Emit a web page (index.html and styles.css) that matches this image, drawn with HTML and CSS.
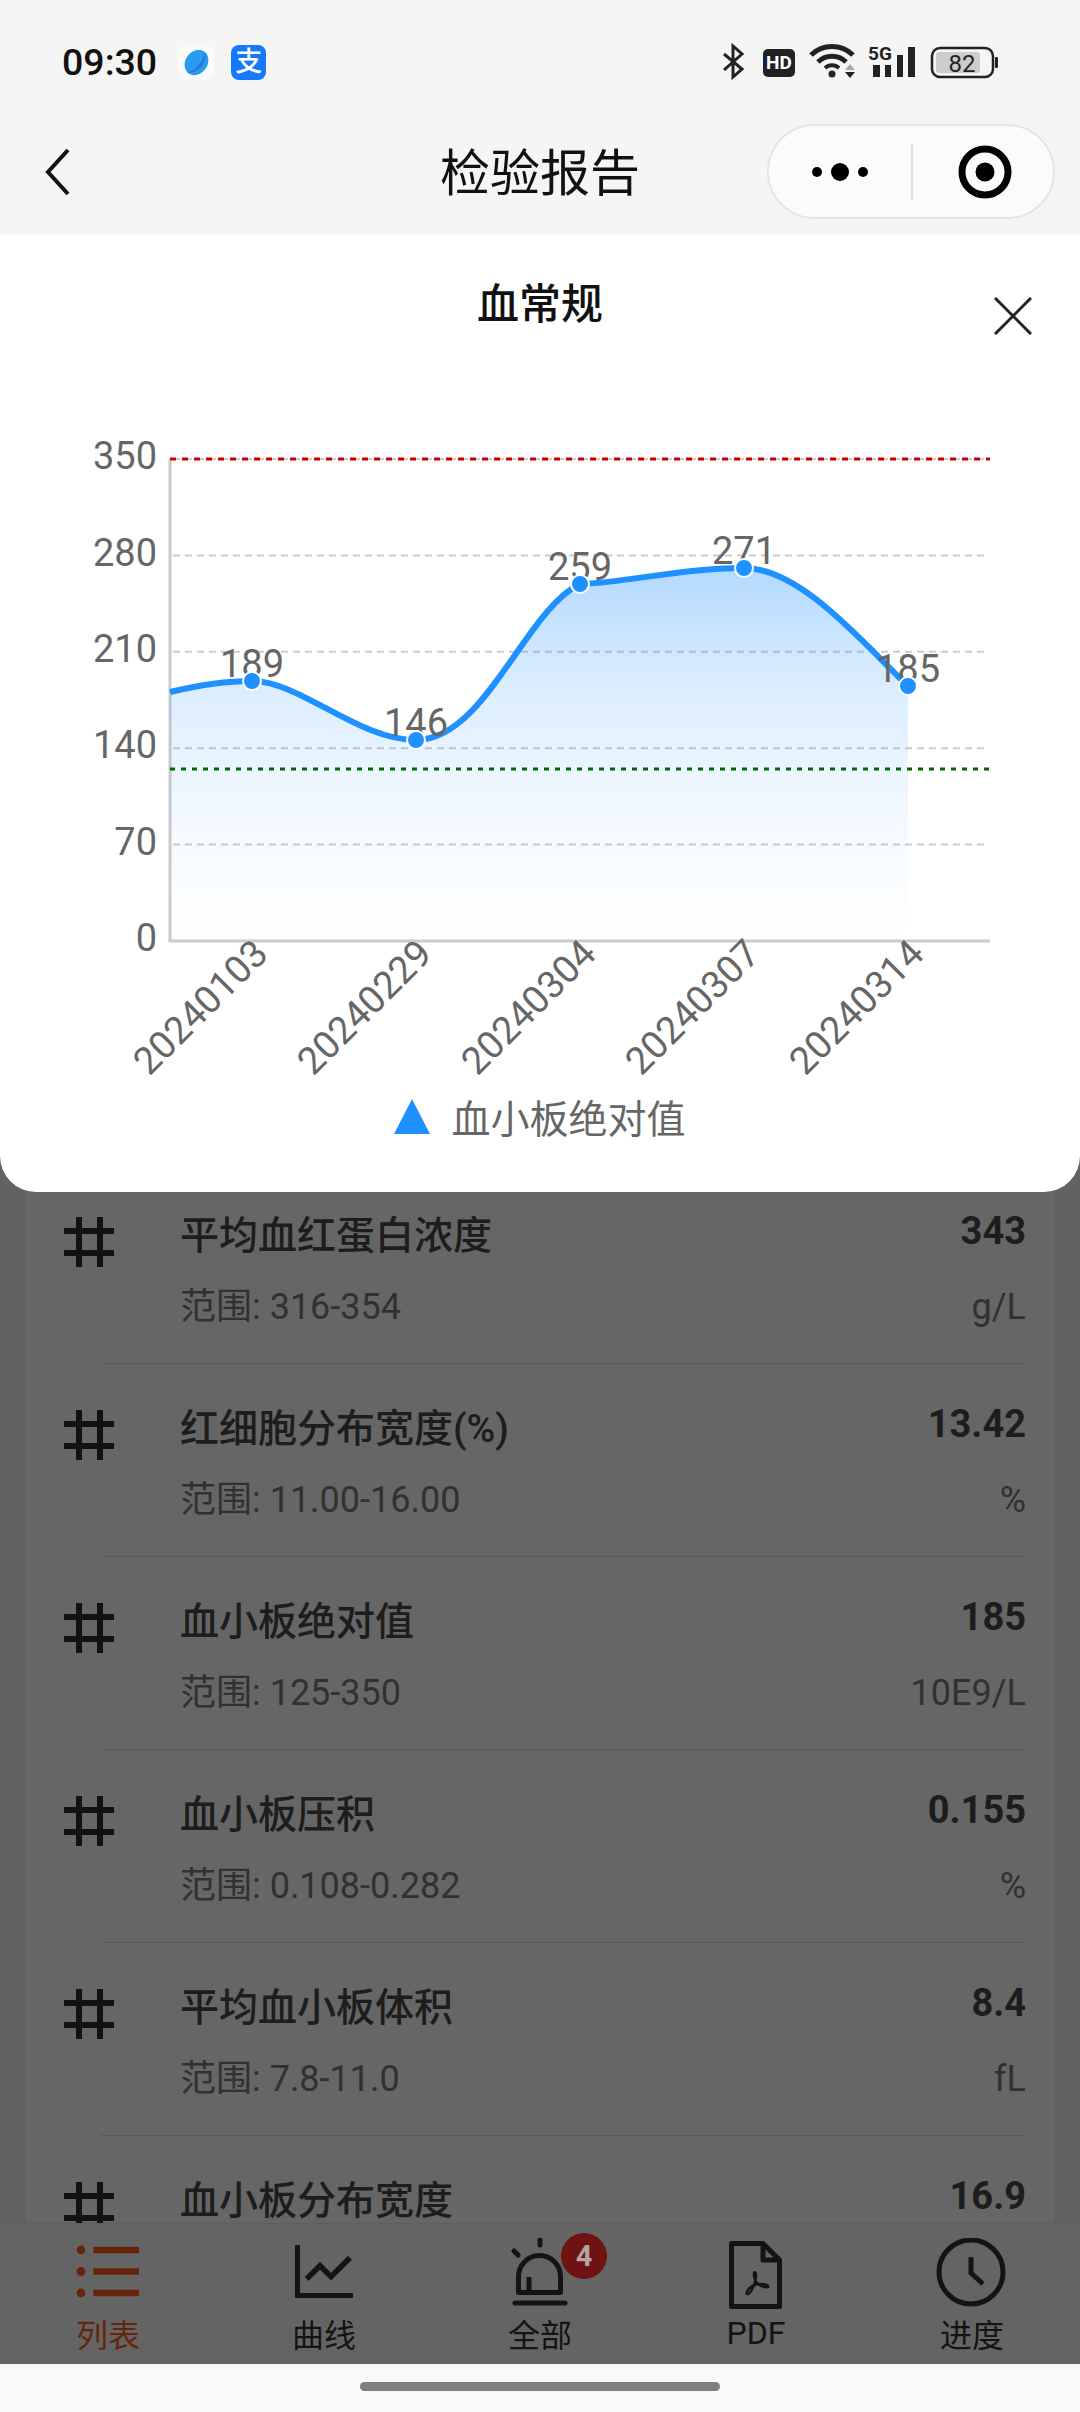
FILE: index.html
```html
<!DOCTYPE html>
<html lang="zh">
<head>
    <meta charset="UTF-8">
    <title>检验报告</title>
    <link rel="stylesheet" href="styles.css">
</head>
<body>
<div class="page">
    <div class="status">
        <div class="status-left">
            <span class="time">09:30</span>
            <svg class="app-icon" viewBox="0 0 35 35">
                <rect width="35" height="35" rx="8" fill="#fafafa"/>
                <ellipse cx="17.5" cy="17.5" rx="11" ry="13.500" transform="rotate(35 17.5 17.5)" fill="#2a9cf0"/>
                <path d="M26 7 C29 16 21 28 8 28 C17 25 24 17 26 7Z" fill="#2f6fe0"/>
            </svg>
            <span class="alipay">支</span>
        </div>
        <svg class="status-right" viewBox="720 42 282 40">
            <path d="M724 54 L742 69 L733 77 V46 L742 54 L724 70" fill="none" stroke="#222" stroke-width="3"/>
            <rect x="763" y="49" width="32" height="28" rx="5" fill="#222"/>
            <text x="779" y="69" class="st-hd">HD</text>
            <path d="M811 55 A30 30 0 0 1 853 55" fill="none" stroke="#222" stroke-width="5"/>
            <path d="M818 62 A20 20 0 0 1 846 62" fill="none" stroke="#222" stroke-width="5"/>
            <path d="M825 68 A10 10 0 0 1 839 68" fill="none" stroke="#222" stroke-width="4"/>
            <circle cx="832" cy="74" r="3.5" fill="#222"/>
            <path d="M845 70 L850 64 L855 70Z" fill="#aaa"/>
            <path d="M845 72 L855 72 L850 78Z" fill="#222"/>
            <text x="880" y="60" class="st-5g">5G</text>
            <rect x="873" y="65" width="7" height="12" fill="#222"/>
            <rect x="885" y="65" width="6" height="12" fill="#222"/>
            <rect x="897" y="55" width="6" height="22" fill="#222"/>
            <rect x="908" y="47" width="7" height="30" fill="#222"/>
            <rect x="932" y="48" width="61" height="29" rx="8" fill="none" stroke="#222" stroke-width="2.5"/>
            <rect x="936" y="52" width="44" height="21" rx="3" fill="#ccc"/>
            <rect x="995" y="57" width="3" height="11" rx="1" fill="#222"/>
            <text x="962" y="72" class="st-batt">82</text>
        </svg>
    </div>

    <div class="nav">
        <svg class="back" viewBox="0 0 30 50"><path d="M26 3 L6 25 L26 47" fill="none" stroke="#111" stroke-width="4"/></svg>
        <div class="nav-title">检验报告</div>
        <div class="capsule">
            <div class="dots"><i></i><b></b><i></i></div>
            <div class="capsule-line"></div>
            <svg class="target" viewBox="0 0 60 60">
                <circle cx="30" cy="30" r="23" fill="none" stroke="#000" stroke-width="7"/>
                <circle cx="30" cy="30" r="9.500"/>
            </svg>
        </div>
    </div>

    <div class="main">
        <div class="list">
            <div class="row">
                <svg class="hash" viewBox="0 0 50 50"><path d="M15 0 V50 M36 0 V50 M0 14 H50 M0 36 H50"/></svg>
                <div class="row-body">
                    <div class="row-top"><span class="row-name">平均血红蛋白浓度</span><span class="row-value">343</span></div>
                    <div class="row-sub"><span>范围: 316-354</span><span>g/L</span></div>
                </div>
            </div>
            <div class="sep"></div>
            <div class="row">
                <svg class="hash" viewBox="0 0 50 50"><path d="M15 0 V50 M36 0 V50 M0 14 H50 M0 36 H50"/></svg>
                <div class="row-body">
                    <div class="row-top"><span class="row-name">红细胞分布宽度(%)</span><span class="row-value">13.42</span></div>
                    <div class="row-sub"><span>范围: 11.00-16.00</span><span>%</span></div>
                </div>
            </div>
            <div class="sep"></div>
            <div class="row">
                <svg class="hash" viewBox="0 0 50 50"><path d="M15 0 V50 M36 0 V50 M0 14 H50 M0 36 H50"/></svg>
                <div class="row-body">
                    <div class="row-top"><span class="row-name">血小板绝对值</span><span class="row-value">185</span></div>
                    <div class="row-sub"><span>范围: 125-350</span><span>10E9/L</span></div>
                </div>
            </div>
            <div class="sep"></div>
            <div class="row">
                <svg class="hash" viewBox="0 0 50 50"><path d="M15 0 V50 M36 0 V50 M0 14 H50 M0 36 H50"/></svg>
                <div class="row-body">
                    <div class="row-top"><span class="row-name">血小板压积</span><span class="row-value">0.155</span></div>
                    <div class="row-sub"><span>范围: 0.108-0.282</span><span>%</span></div>
                </div>
            </div>
            <div class="sep"></div>
            <div class="row">
                <svg class="hash" viewBox="0 0 50 50"><path d="M15 0 V50 M36 0 V50 M0 14 H50 M0 36 H50"/></svg>
                <div class="row-body">
                    <div class="row-top"><span class="row-name">平均血小板体积</span><span class="row-value">8.4</span></div>
                    <div class="row-sub"><span>范围: 7.8-11.0</span><span>fL</span></div>
                </div>
            </div>
            <div class="sep"></div>
            <div class="row">
                <svg class="hash" viewBox="0 0 50 50"><path d="M15 0 V50 M36 0 V50 M0 14 H50 M0 36 H50"/></svg>
                <div class="row-body">
                    <div class="row-top"><span class="row-name">血小板分布宽度</span><span class="row-value">16.9</span></div>
                </div>
            </div>
        </div>

        <div class="tabbar">
            <div class="tab active">
                <svg class="tab-icon" viewBox="0 0 72 72"><circle cx="9" cy="12" r="4.400" class="fill"/><circle cx="9" cy="33.500" r="4.400" class="fill"/><circle cx="9" cy="55" r="4.400" class="fill"/><path d="M21.300 12 H67 M21.300 33.500 H67 M21.300 55 H67" stroke-width="6.500"/></svg>
                <span>列表</span>
            </div>
            <div class="tab">
                <svg class="tab-icon" viewBox="0 0 72 72"><path d="M9.500 7 V57.500 H65" stroke-width="5"/><path d="M18.700 41 L32 27.700 L43 38.700 L62 19.700" stroke-width="5.500"/></svg>
                <span>曲线</span>
            </div>
            <div class="tab">
                <div class="alarm">
                    <svg class="tab-icon" viewBox="0 0 72 72"><path d="M11 65 H61 M36 2 V7 M10 13 L14 17" stroke-width="5" stroke-linecap="round"/><path d="M14.500 54.500 V38.500 A21 21 0 0 1 56.500 38.500 V54.500 Z M25 54.500 V39" stroke-width="5" stroke-linejoin="round"/></svg>
                    <span class="badge">4</span>
                </div>
                <span>全部</span>
            </div>
            <div class="tab pdf">
                <svg class="tab-icon" viewBox="0 0 72 72"><path d="M11.500 5.500 H43 L59.500 22 V68.500 H11.500 Z M43 5.500 V22 H59.500" stroke-width="5" stroke-linejoin="round"/><path d="M35 34 C33 34 34 40 36 44 C38 47 45 50 48 49 C49 46 40 45 34 47 C30 49 26 53 27 56 C30 57 33 50 35 44 C36 40 37 35 35 34Z" stroke-width="2.500"/></svg>
                <span>PDF</span>
            </div>
            <div class="tab">
                <svg class="tab-icon" viewBox="0 0 72 72"><circle cx="35" cy="34" r="32" stroke-width="5"/><path d="M35 19 V35 L47 46" stroke-width="5"/></svg>
                <span>进度</span>
            </div>
        </div>

        <div class="mask"></div>

        <div class="modal">
            <div class="modal-head">
                <div class="modal-title">血常规</div>
                <svg class="close" viewBox="0 0 38 38"><path d="M1 1 L37 37 M37 1 L1 37" stroke="#222" stroke-width="3" fill="none"/></svg>
            </div>
            <!-- viewBox keeps the numbers in screen coordinates -->
            <svg class="chart" viewBox="0 375 1080 710">
                <defs>
                    <linearGradient id="area" x1="0" y1="0" x2="0" y2="1">
                        <stop offset="0" stop-color="#1e90ff" stop-opacity="0.34"/>
                        <stop offset="0.22" stop-color="#1e90ff" stop-opacity="0.21"/>
                        <stop offset="0.35" stop-color="#1e90ff" stop-opacity="0.15"/>
                        <stop offset="0.54" stop-color="#1e90ff" stop-opacity="0.09"/>
                        <stop offset="0.74" stop-color="#1e90ff" stop-opacity="0.04"/>
                        <stop offset="1" stop-color="#1e90ff" stop-opacity="0"/>
                    </linearGradient>
                </defs>
                <path class="grid" d="M173 459 H990 M173 555.400 H985 M173 651.800 H985 M173 748.200 H985 M173 844.600 H985"/>
                <path class="axis" d="M170 459 V941 H990"/>
                <path class="area" d="M170 692 C195 686 225 681 252 681 C300 681 358 740 416 740 C485 740 525 610 580 584 C625 583 680 568 744 568 C800 568 860 640 908 686 V941 H170 Z"/>
                <path class="line-max" d="M170 459 H990"/>
                <path class="line-min" d="M170 769 H990"/>
                <path class="curve" d="M170 692 C195 686 225 681 252 681 C300 681 358 740 416 740 C485 740 525 610 580 584 C625 583 680 568 744 568 C800 568 860 640 908 686"/>

                <text class="ylabel" x="157" y="469">350</text>
                <text class="ylabel" x="157" y="565.500">280</text>
                <text class="ylabel" x="157" y="662">210</text>
                <text class="ylabel" x="157" y="758">140</text>
                <text class="ylabel" x="157" y="855">70</text>
                <text class="ylabel" x="157" y="951">0</text>

                <text class="xlabel" transform="translate(270 956) rotate(-45)">20240103</text>
                <text class="xlabel" transform="translate(434 956) rotate(-45)">20240229</text>
                <text class="xlabel" transform="translate(598 956) rotate(-45)">20240304</text>
                <text class="xlabel" transform="translate(762 956) rotate(-45)">20240307</text>
                <text class="xlabel" transform="translate(926 956) rotate(-45)">20240314</text>

                <text class="val" x="252" y="677">189</text>
                <text class="val" x="416" y="736">146</text>
                <text class="val" x="580" y="580">259</text>
                <text class="val" x="744" y="564">271</text>
                <text class="val" x="908" y="682">185</text>

                <circle class="pt" cx="252" cy="681" r="9"/>
                <circle class="pt" cx="416" cy="740" r="9"/>
                <circle class="pt" cx="580" cy="584" r="9"/>
                <circle class="pt" cx="744" cy="568" r="9"/>
                <circle class="pt" cx="908" cy="686" r="9"/>
            </svg>
            <div class="legend">
                <span class="legend-mark"></span>
                <span>血小板绝对值</span>
            </div>
        </div>
    </div>

    <div class="home"><div class="home-bar"></div></div>
</div>
</body>
</html>
```

FILE: styles.css
```css
* {
    box-sizing: border-box;
}

html, body {
    margin: 0;
    padding: 0;
    background-color: #f5f5f5;
}

body {
    font-family: Roboto, "Noto Sans CJK SC", sans-serif;
}

.page {
    width: 1080px;
    height: 2412px;
    display: flex;
    flex-direction: column;
    overflow: hidden;
}

/* status bar */
.status {
    height: 124px;
    flex-shrink: 0;
    display: flex;
    justify-content: space-between;
    align-items: center;
    padding: 0 78px 0 62px;
}

.status-left {
    display: flex;
    align-items: center;
}

.time {
    font-size: 37.500px;
    font-weight: 500;
    color: #111;
    margin-right: 22px;
}

.app-icon {
    width: 35px;
    height: 35px;
    margin-right: 17px;
}

.alipay {
    width: 35px;
    height: 35px;
    border-radius: 8px;
    background-color: #1677ff;
    color: #fff;
    font-size: 27px;
    font-weight: 500;
    line-height: 35px;
    text-align: center;
}

.status-right {
    width: 282px;
    height: 40px;
}

.st-hd {
    font-size: 19px;
    font-weight: 700;
    fill: #fff;
    text-anchor: middle;
}

.st-5g {
    font-size: 19px;
    font-weight: 700;
    fill: #222;
    text-anchor: middle;
}

.st-batt {
    font-size: 24px;
    fill: #222;
    text-anchor: middle;
}

/* nav */
.nav {
    height: 111px;
    flex-shrink: 0;
    display: grid;
    grid-template-columns: 1fr auto 1fr;
    align-items: center;
    padding: 0 25px 17px 25px;
}

.back {
    width: 30px;
    height: 50px;
    margin-left: 17px;
}

.nav-title {
    font-size: 50px;
    color: #111;
    line-height: 60px;
    padding-top: 4px;
}

.capsule {
    justify-self: end;
    width: 288px;
    height: 95px;
    border: 2px solid #e5e5e5;
    border-radius: 48px;
    background-color: #fbfbfb;
    display: flex;
    align-items: center;
}

.dots {
    width: 142px;
    display: flex;
    justify-content: center;
    align-items: center;
    gap: 9px;
}

.dots i {
    width: 10px;
    height: 10px;
    border-radius: 50%;
    background-color: #000;
}

.dots b {
    width: 18px;
    height: 18px;
    border-radius: 50%;
    background-color: #000;
}

.capsule-line {
    width: 2px;
    height: 56px;
    background-color: #ddd;
}

.target {
    width: 60px;
    height: 60px;
    margin-left: 42px;
}

/* page under the popup */
.main {
    position: relative;
    flex: 1;
    min-height: 0;
    display: flex;
    flex-direction: column;
}

.list {
    flex: 1;
    min-height: 0;
    overflow: hidden;
    margin: 0 26px;
    padding-top: 936px;
    background-color: #fff;
}

.row {
    height: 192px;
    display: flex;
    padding: 46px 28px 0 38px;
}

.sep {
    height: 1px;
    margin: 0 28px 0 74px;
    background-color: #e2e2e2;
}

.hash {
    width: 50px;
    height: 50px;
    flex-shrink: 0;
    fill: none;
    stroke: #2f2f2f;
    stroke-width: 6;
}

.row-body {
    flex: 1;
    margin-top: -6px;
    margin-left: 66px;
}

.row-top {
    height: 48px;
    display: flex;
    justify-content: space-between;
    align-items: flex-start;
}

.row-name {
    font-size: 39px;
    font-weight: 500;
    line-height: 50px;
    color: #4a4a4a;
}

.row-value {
    font-size: 38px;
    font-weight: 700;
    line-height: 40px;
    color: #4a4a4a;
}

.row-sub {
    height: 48px;
    margin-top: 24px;
    display: flex;
    justify-content: space-between;
    font-size: 36px;
    line-height: 48px;
    color: #7a7a7a;
}

/* tab bar */
.tabbar {
    height: 141px;
    flex-shrink: 0;
    display: grid;
    grid-template-columns: repeat(5, 1fr);
    background-color: #fafafa;
    border-top: 1px solid #eee;
}

.tab {
    display: flex;
    flex-direction: column;
    align-items: center;
    padding-top: 14px;
    font-size: 32px;
    line-height: 40px;
    color: #333;
}

.tab-icon {
    width: 72px;
    height: 72px;
    fill: none;
    stroke: #333;
}

.tab.active {
    color: #ff5a1e;
}

.tab.active .tab-icon {
    stroke: #ff5a1e;
}

.tab-icon .fill {
    fill: #ff5a1e;
    stroke: none;
}

.tab span {
    margin-top: 6px;
}

.tab.pdf span {
    margin-top: 3px;
}

.alarm {
    position: relative;
    height: 72px;
}

/* sits above the mask, so its colours are the dimmed ones */
.tab .badge {
    position: absolute;
    z-index: 2;
    left: 57px;
    top: -5px;
    width: 46px;
    height: 46px;
    margin: 0;
    border-radius: 50%;
    background-color: #701212;
    color: #b3a3a3;
    font-size: 29px;
    font-weight: 700;
    line-height: 46px;
    text-align: center;
}

/* popup */
.mask {
    position: absolute;
    inset: 0;
    background-color: rgba(0, 0, 0, 0.6);
}

.modal {
    position: absolute;
    top: 0;
    left: 0;
    right: 0;
    height: 957px;
    background-color: #fff;
    border-radius: 0 0 36px 36px;
    display: flex;
    flex-direction: column;
}

.modal-head {
    position: relative;
    height: 140px;
    flex-shrink: 0;
    padding-top: 44px;
    text-align: center;
}

.modal-title {
    font-size: 42px;
    font-weight: 500;
    line-height: 52px;
    color: #111;
}

.close {
    position: absolute;
    top: 62px;
    right: 48px;
    width: 38px;
    height: 38px;
}

.chart {
    width: 1080px;
    height: 710px;
    flex-shrink: 0;
}

.grid {
    fill: none;
    stroke: #ccc;
    stroke-width: 2;
    stroke-dasharray: 7 5;
}

.axis {
    fill: none;
    stroke: #ccc;
    stroke-width: 3;
}

.area {
    fill: url(#area);
}

.line-max {
    fill: none;
    stroke: #c00;
    stroke-width: 3;
    stroke-dasharray: 6 6;
}

.line-min {
    fill: none;
    stroke: #060;
    stroke-width: 3;
    stroke-dasharray: 5 6;
}

.curve {
    fill: none;
    stroke: #1e90ff;
    stroke-width: 6;
}

.pt {
    fill: #1e90ff;
    stroke: #fff;
    stroke-width: 2;
}

.ylabel, .val, .xlabel {
    font-size: 38px;
    fill: #666;
}

.ylabel {
    text-anchor: end;
}

.xlabel {
    text-anchor: end;
}

.val {
    text-anchor: middle;
}

.legend {
    height: 66px;
    padding-bottom: 4px;
    display: flex;
    justify-content: center;
    align-items: center;
    gap: 21px;
    font-size: 39px;
    color: #666;
}

.legend-mark {
    width: 0;
    height: 0;
    border-left: 18px solid transparent;
    border-right: 18px solid transparent;
    border-bottom: 35px solid #1e90ff;
}

/* gesture bar */
.home {
    height: 48px;
    flex-shrink: 0;
    padding-top: 18px;
    background-color: #f8f8f8;
}

.home-bar {
    width: 360px;
    height: 9px;
    margin: 0 auto;
    border-radius: 5px;
    background-color: #7f7f7f;
}
```
